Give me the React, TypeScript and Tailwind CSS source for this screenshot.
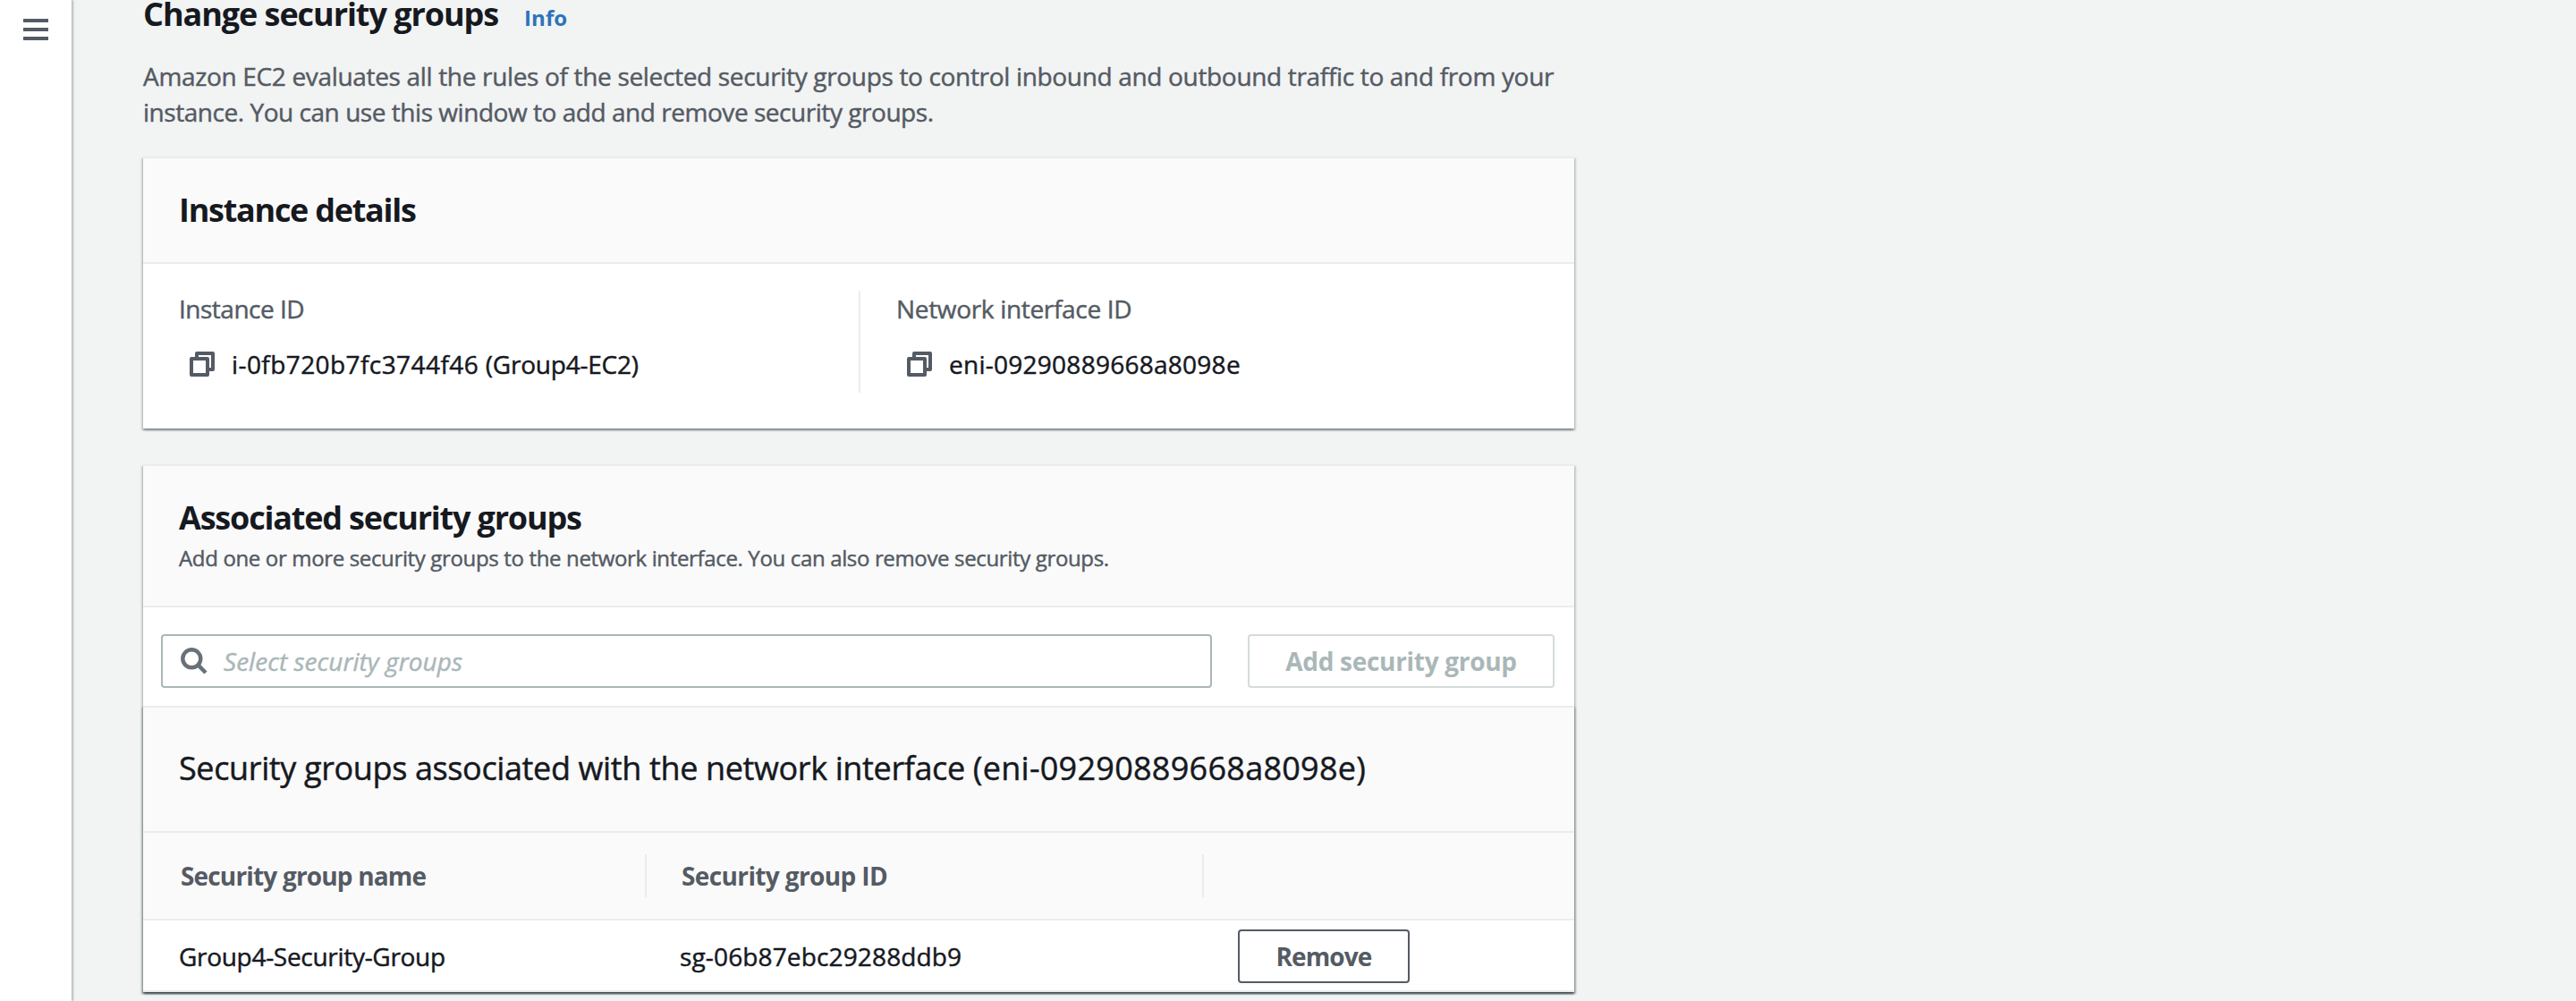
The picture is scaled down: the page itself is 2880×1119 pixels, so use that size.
import type { ReactNode } from "react";

function MenuIcon() {
  return (
    <svg width="28" height="24" viewBox="0 0 28 24" fill="#545b64">
      <rect y="0" width="28" height="4" />
      <rect y="10" width="28" height="4" />
      <rect y="20" width="28" height="4" />
    </svg>
  );
}

function CopyIcon() {
  return (
    <svg
      className="shrink-0"
      width="28"
      height="28"
      viewBox="0 0 28 28"
      fill="none"
      stroke="#545b64"
      strokeWidth="4"
      strokeLinejoin="round"
    >
      <rect x="2" y="8" width="18" height="18" />
      <path d="M8 8V2H26V20H20" />
    </svg>
  );
}

function SearchIcon() {
  return (
    <svg
      className="shrink-0"
      width="30"
      height="30"
      viewBox="0 0 30 30"
      fill="none"
      stroke="#687078"
      strokeWidth="4.4"
    >
      <circle cx="12.3" cy="12.3" r="10" />
      <path d="M19.4 19.4L28 28" />
    </svg>
  );
}

const cardShadow =
  "shadow-[0_2px_2px_0_rgba(0,28,36,0.3),2px_2px_2px_0_rgba(0,28,36,0.15),-2px_2px_2px_0_rgba(0,28,36,0.15)]";

function Card({ children, className = "" }: { children: ReactNode; className?: string }) {
  return (
    <section className={`border-t-2 border-[#eaeded] bg-white ${cardShadow} ${className}`}>{children}</section>
  );
}

function CopyValue({ children }: { children: ReactNode }) {
  return (
    <div className="mt-[22px] flex items-center gap-[19px] pl-3 leading-10 tracking-[0.26px] text-[#16191f]">
      <CopyIcon />
      <span>{children}</span>
    </div>
  );
}

export default function App() {
  return (
    <div className="flex h-[1119px] w-[2880px] overflow-hidden whitespace-nowrap bg-[#f2f3f3] font-['Open_Sans',sans-serif] text-[28px] text-[#16191f] [-webkit-text-stroke:0.45px]">
      <aside className="z-10 w-20 shrink-0 bg-white pl-[26px] pt-[21px] shadow-[2px_0_2px_0_rgba(0,28,36,0.25)]">
        <MenuIcon />
      </aside>

      <main className="ml-20 w-[1600px]">
        <header>
          <div className="flex h-[30px] items-baseline">
            <h1 className="w-[426px] text-[36px] font-bold leading-[31px] tracking-[-1.06px] [-webkit-text-stroke:0]">
              Change security groups
            </h1>
            <a className="text-[24px] font-bold leading-6 tracking-[0.1px] text-[#2b74bb] [-webkit-text-stroke:0]">Info</a>
          </div>
          <div className="mt-[35px] leading-10 text-[#545b64]">
            <p className="tracking-[-0.33px]">
              Amazon EC2 evaluates all the rules of the selected security groups to control inbound and outbound
              traffic to and from your
            </p>
            <p className="tracking-[-0.46px]">instance. You can use this window to add and remove security groups.</p>
          </div>
        </header>

        <Card className="mt-[30px]">
          <div className="border-b-2 border-[#eaeded] bg-[#fafafa] px-10 py-9">
            <h2 className="text-[36px] font-bold leading-[44px] tracking-[-1.27px] [-webkit-text-stroke:0]">
              Instance details
            </h2>
          </div>
          <div className="flex px-10 pb-10 pt-[30px]">
            <div className="h-[114px] w-[762px] border-r-2 border-[#eaeded]">
              <div className="leading-10 tracking-[-0.5px] text-[#545b64]">Instance ID</div>
              <CopyValue>
                <span className="tracking-[0.42px]">i-0fb720b7fc3744f46 </span>
                <span className="tracking-[-0.22px]">(Group4-EC2)</span>
              </CopyValue>
            </div>
            <div className="pl-10">
              <div className="leading-10 tracking-[-0.32px] text-[#545b64]">Network interface ID</div>
              <CopyValue>eni-09290889668a8098e</CopyValue>
            </div>
          </div>
        </Card>

        <Card className="mt-10">
          <div className="h-[158px] border-b-2 border-[#eaeded] bg-[#fafafa] px-10 pt-9">
            <h2 className="text-[36px] font-bold leading-[44px] tracking-[-1.19px] [-webkit-text-stroke:0]">
              Associated security groups
            </h2>
            <p className="mt-[7px] text-[24px] leading-8 tracking-[-0.35px] text-[#545b64]">
              Add one or more security groups to the network interface. You can also remove security groups.
            </p>
          </div>
          <div className="flex gap-10 pb-5 pl-5 pr-[22px] pt-[30px]">
            <div className="flex h-[60px] flex-1 items-center gap-[18px] rounded-[4px] border-2 border-[#aab7b8] bg-white pl-5">
              <SearchIcon />
              <span className="italic tracking-[0.03px] text-[#aab7b8]">Select security groups</span>
            </div>
            <button className="h-[60px] w-[343px] rounded-[4px] border-2 border-[#d5dbdb] bg-white font-bold tracking-[-0.3px] text-[#aab7b8] [-webkit-text-stroke:0]">
              Add security group
            </button>
          </div>

          <Card>
            <div className="h-[140px] border-b-2 border-[#eaeded] bg-[#fafafa] px-10 pt-[46px]">
              <h3 className="text-[36px] leading-[44px]">
                <span className="tracking-[-0.37px]">Security groups associated with the network interface </span>
                <span className="tracking-[0.27px]">(eni-09290889668a8098e)</span>
              </h3>
            </div>
            <div className="flex h-[98px] items-center border-b-2 border-[#eaeded] bg-[#fafafa] font-bold text-[#545b64] [-webkit-text-stroke:0]">
              <div className="h-12 w-[563px] border-r-2 border-[#eaeded] pl-[42px] leading-[48px] tracking-[-0.83px]">
                Security group name
              </div>
              <div className="h-12 w-[623px] border-r-2 border-[#eaeded] pl-[39px] leading-[48px] tracking-[-0.62px]">
                Security group ID
              </div>
            </div>
            <div className="flex h-20 items-start border-b-2 border-[#eaeded] pt-2.5 leading-[60px]">
              <div className="w-[563px] pl-10 tracking-[-0.3px]">Group4-Security-Group</div>
              <div className="w-[623px] pl-[37px] tracking-[0.14px]">sg-06b87ebc29288ddb9</div>
              <div className="pl-[38px]">
                <button className="block h-[60px] w-48 rounded-[4px] border-2 border-[#545b64] bg-white font-bold leading-[56px] tracking-[-0.9px] text-[#545b64] [-webkit-text-stroke:0]">
                  Remove
                </button>
              </div>
            </div>
          </Card>
        </Card>
      </main>
    </div>
  );
}
